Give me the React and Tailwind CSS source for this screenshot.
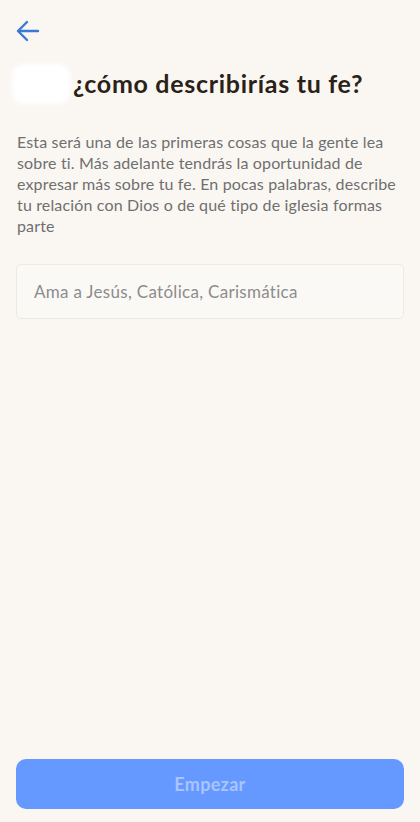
import React from 'react';

const App = () => {
    return (
        <div
            className="flex h-[822px] w-full flex-col bg-[#faf7f3]"
            style={{ fontFamily: 'Lato, "Noto Sans", sans-serif' }}
        >
            <div className="px-4 pt-[20px]">
                <button className="flex h-[22px] w-[24px] items-center text-[#3a79d6]">
                    <svg width="24" height="22" viewBox="0 0 24 22" fill="none" stroke="currentColor" strokeWidth="2.4" strokeLinecap="round" strokeLinejoin="round">
                        <path d="M22 11H2.5" />
                        <path d="M11 2L2 11l9 9" />
                    </svg>
                </button>
            </div>

            <div className="mt-[22px] flex items-center pl-[12px]">
                {/* redacted name */}
                <div className="h-[40px] w-[58px] rounded-[12px] bg-white blur-[2px]" />
                <h1 className="ml-[3px] text-[25px] font-bold tracking-[0.7px] text-[#2a2117]">¿cómo describirías tu fe?</h1>
            </div>

            <p className="mt-[27px] px-[17px] text-[16px] leading-[21px] tracking-[0.15px] text-[#6f6f6f]">
                Esta será una de las primeras cosas que la gente lea sobre ti. Más adelante tendrás la oportunidad de expresar más sobre tu fe. En pocas palabras, describe tu relación con Dios o de qué tipo de iglesia formas parte
            </p>

            <div className="mx-4 mt-[28px] flex h-[55px] items-center rounded-[5px] border border-[#ede8e1] bg-[#fbf9f6] px-[17px]">
                <input
                    className="w-full bg-transparent text-[17px] tracking-[0.3px] text-[#333] outline-none placeholder:text-[#8c8c8c]"
                    placeholder="Ama a Jesús, Católica, Carismática"
                />
            </div>

            <div className="flex-1" />

            <div className="px-4 pb-[13px]">
                <button className="flex h-[50px] w-full items-center justify-center rounded-[10px] bg-[#6699ff] text-[18px] font-bold tracking-[0.3px] text-[#a9c4ff]">
                    Empezar
                </button>
            </div>
        </div>
    );
};

export default App;
